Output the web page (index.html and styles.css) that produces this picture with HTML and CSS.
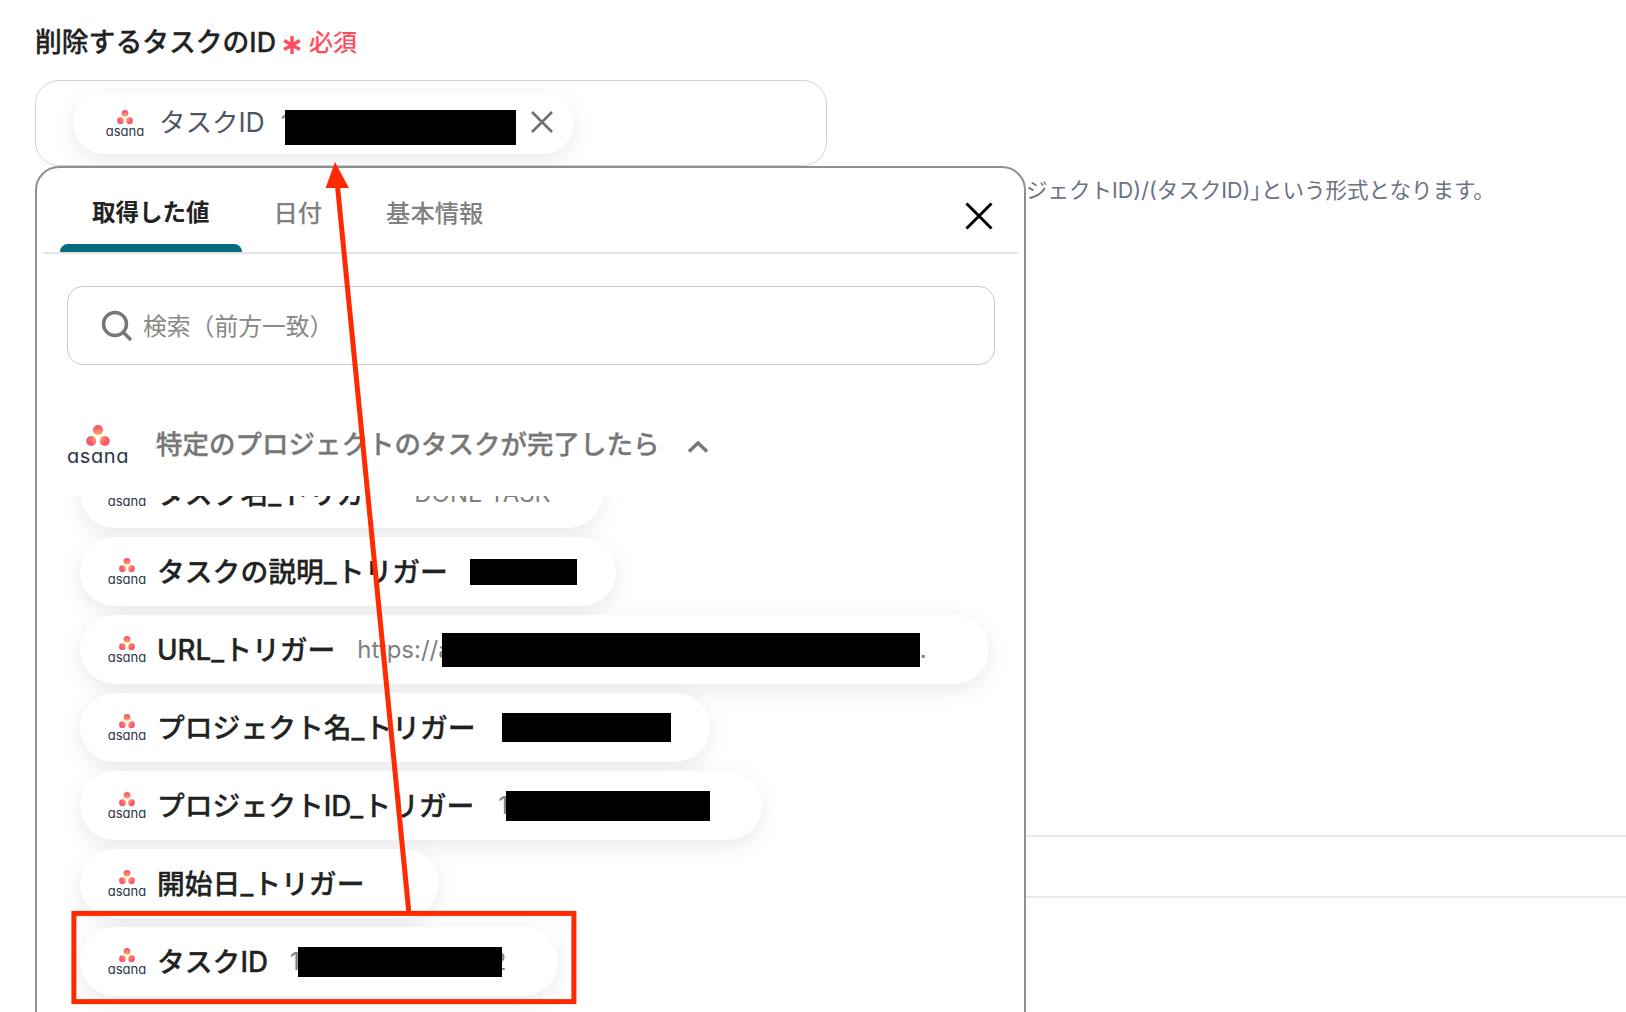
FILE: index.html
```html
<!DOCTYPE html>
<html lang="ja">

<head>
    <meta charset="UTF-8">
    <title>削除するタスクのID</title>
    <link rel="stylesheet" href="styles.css">
</head>

<body>

    <svg class="defs" width="0" height="0" aria-hidden="true">
        <defs>
            <radialGradient id="asanaDot" gradientUnits="userSpaceOnUse" cx="12" cy="11.5" r="13">
                <stop offset="0%" stop-color="#ffb84a"></stop>
                <stop offset="30%" stop-color="#ff9a58"></stop>
                <stop offset="70%" stop-color="#fa5c74"></stop>
                <stop offset="100%" stop-color="#f9507a"></stop>
            </radialGradient>
            <symbol id="asanaDots" viewBox="0 0 24 21">
                <circle cx="12" cy="5" r="5" fill="url(#asanaDot)"></circle>
                <circle cx="5.2" cy="16" r="5" fill="url(#asanaDot)"></circle>
                <circle cx="18.8" cy="16" r="5" fill="url(#asanaDot)"></circle>
            </symbol>
        </defs>
    </svg>

    <label class="field-label">
        <span class="field-name">削除するタスクのID</span>
        <svg class="required-mark" viewBox="0 0 18 18">
            <path d="M9 0 V18 M1.2 4.5 L16.8 13.5 M16.8 4.5 L1.2 13.5"></path>
        </svg>
        <span class="required-text">必須</span>
    </label>

    <div class="field">
        <div class="input-box">
            <div class="chip chip-input">
                <div class="logo">
                    <svg class="logo-dots"><use href="#asanaDots"></use></svg>
                    <span class="logo-word">asana</span>
                </div>
                <span class="chip-label">タスクID</span>
                <span class="chip-value">1<span class="redact redact-input"></span></span>
                <svg class="chip-remove" viewBox="0 0 24 24">
                    <path d="M2 2 L22 22 M22 2 L2 22"></path>
                </svg>
            </div>
        </div>

        <!-- Dropdown -->
        <div class="dropdown">
            <div class="tabs">
                <div class="tab active"><span class="tab-label">取得した値</span></div>
                <div class="tab"><span class="tab-label">日付</span></div>
                <div class="tab"><span class="tab-label">基本情報</span></div>
                <svg class="tabs-close" viewBox="0 0 28 28">
                    <path d="M1.5 1.5 L26.5 26.5 M26.5 1.5 L1.5 26.5"></path>
                </svg>
            </div>

            <div class="search">
                <svg class="search-icon" viewBox="0 0 32 32">
                    <circle cx="14" cy="14" r="11.5"></circle>
                    <path d="M22.5 22.5 L30 30"></path>
                </svg>
                <span class="search-text">検索（前方一致）</span>
            </div>

            <div class="group-head">
                <div class="logo logo-large">
                    <svg class="logo-dots"><use href="#asanaDots"></use></svg>
                    <span class="logo-word">asana</span>
                </div>
                <span class="group-title">特定のプロジェクトのタスクが完了したら</span>
                <svg class="group-chevron" viewBox="0 0 22 12">
                    <path d="M2 10.5 L11 2 L20 10.5"></path>
                </svg>
            </div>

            <div class="list">
                <div class="list-inner">
                    <div class="chip">
                        <div class="logo">
                            <svg class="logo-dots"><use href="#asanaDots"></use></svg>
                            <span class="logo-word">asana</span>
                        </div>
                        <span class="chip-label">タスク名_トリガー</span>
                        <span class="chip-value">DONE TASK</span>
                    </div>
                    <div class="chip chip-desc">
                        <div class="logo">
                            <svg class="logo-dots"><use href="#asanaDots"></use></svg>
                            <span class="logo-word">asana</span>
                        </div>
                        <span class="chip-label">タスクの説明_トリガー</span>
                        <span class="chip-value"><span class="redact redact-desc"></span></span>
                    </div>
                    <div class="chip chip-url">
                        <div class="logo">
                            <svg class="logo-dots"><use href="#asanaDots"></use></svg>
                            <span class="logo-word">asana</span>
                        </div>
                        <span class="chip-label">URL_トリガー</span>
                        <span class="chip-value">https://a<span class="redact redact-url"></span>.</span>
                    </div>
                    <div class="chip chip-project">
                        <div class="logo">
                            <svg class="logo-dots"><use href="#asanaDots"></use></svg>
                            <span class="logo-word">asana</span>
                        </div>
                        <span class="chip-label">プロジェクト名_トリガー</span>
                        <span class="chip-value"><span class="redact redact-project"></span></span>
                    </div>
                    <div class="chip chip-project-id">
                        <div class="logo">
                            <svg class="logo-dots"><use href="#asanaDots"></use></svg>
                            <span class="logo-word">asana</span>
                        </div>
                        <span class="chip-label">プロジェクトID_トリガー</span>
                        <span class="chip-value">1<span class="redact redact-id"></span></span>
                    </div>
                    <div class="chip chip-start">
                        <div class="logo">
                            <svg class="logo-dots"><use href="#asanaDots"></use></svg>
                            <span class="logo-word">asana</span>
                        </div>
                        <span class="chip-label">開始日_トリガー</span>
                    </div>
                    <div class="chip">
                        <div class="logo">
                            <svg class="logo-dots"><use href="#asanaDots"></use></svg>
                            <span class="logo-word">asana</span>
                        </div>
                        <span class="chip-label">タスクID</span>
                        <span class="chip-value">1<span class="redact redact-id"></span><span class="value-tail">2</span></span>
                    </div>
                </div>
            </div>
        </div>
    </div>

    <p class="help">ジェクトID)/(タスクID)｣という形式となります。</p>

    <div class="rows">
        <div class="row"></div>
        <div class="row"></div>
    </div>

    <!-- Annotation drawn over the page -->
    <svg class="annotation" viewBox="0 0 1626 1012">
        <path class="annotation-line" d="M337.5 186 L408.7 911"></path>
        <polygon class="annotation-head" points="335,162 349,188 325.6,188"></polygon>
        <rect class="annotation-box" x="73.9" y="913.4" width="500" height="88.2"></rect>
    </svg>

</body>

</html>
```

FILE: styles.css
```css
* {
    box-sizing: border-box;
}

body {
    position: relative;
    height: 1012px;
    margin: 0;
    overflow: hidden;
    background-color: #fff;
    color: #222;
    font-family: Inter, "Noto Sans CJK JP", sans-serif;
}

.defs {
    position: absolute;
}

.field-label {
    display: flex;
    align-items: center;
    height: 50px;
    margin: 18px 0 12px 35px;
    font-size: 26.8px;
    font-weight: 500;
    line-height: 50px;
}

.field-name {
    padding-bottom: 2px;
    -webkit-text-stroke: 0.3px #222;
}

.required-mark {
    width: 18px;
    height: 18px;
    margin: 4px 0 0 7px;
    fill: none;
    stroke: #ff4d5e;
    stroke-width: 3.4;
}

.required-text {
    margin-left: 8px;
    color: #ff4d5e;
    font-size: 24px;
    font-weight: 500;
}

.field {
    position: relative;
    width: 792px;
    margin-left: 35px;
}

.input-box {
    height: 86px;
    padding: 12px 0 0 37px;
    border: 1px solid #cfd4dc;
    border-radius: 24px;
    background-color: #fff;
}

/* Chips */
.chip {
    display: inline-flex;
    flex: none;
    align-items: center;
    height: 69px;
    padding: 0 52px 0 28px;
    border-radius: 35px;
    background-color: #fff;
    box-shadow: 0 6px 22px rgba(0, 0, 0, 0.09);
}

.chip-input {
    height: 61px;
    padding: 0 20px 0 33px;
    border-radius: 31px;
}

.chip-input .chip-label {
    margin-left: 15px;
    padding-bottom: 7px;
    color: #4b5563;
    font-size: 26.5px;
    font-weight: 400;
    -webkit-text-stroke: 0;
}

.chip-input .chip-value {
    margin-left: 16px;
}

.chip-desc,
.chip-project {
    padding-right: 39px;
}

.chip-url {
    padding-right: 62px;
}

.chip-start {
    padding-right: 75px;
}

.chip-label {
    margin-left: 11px;
    padding-bottom: 3px;
    font-size: 27.8px;
    font-weight: 500;
    white-space: nowrap;
    -webkit-text-stroke: 0.3px #222;
}

.chip-value {
    display: flex;
    align-items: center;
    margin-left: 22px;
    color: #808080;
    font-size: 24px;
    white-space: nowrap;
}

.chip-project-id .chip-value {
    margin-left: 24px;
}

.value-tail {
    margin-left: -10px;
}

.redact {
    position: relative;
    z-index: 1;
    display: block;
    background-color: #000;
}

.redact-input {
    width: 231px;
    height: 35px;
    margin: 8px 0 0 -6px;
}

.redact-desc {
    width: 107px;
    height: 26px;
}

.redact-url {
    width: 478px;
    height: 34px;
    margin-left: -10px;
}

.redact-project {
    width: 169px;
    height: 29px;
    margin-left: 4px;
}

.redact-id {
    width: 204px;
    height: 30px;
    margin-left: -2px;
}

.chip-remove {
    flex: none;
    width: 24px;
    height: 24px;
    margin: 0 0 4px 14px;
    fill: none;
    stroke: #707070;
    stroke-width: 2.6;
}

/* Asana logo */
.logo {
    display: flex;
    flex: none;
    flex-direction: column;
    align-items: center;
    width: 38px;
    margin-bottom: 2px;
}

.logo-dots {
    width: 16px;
    height: 14px;
}

.logo-word {
    margin-top: 3px;
    color: #2b3546;
    font-family: Inter, sans-serif;
    font-feature-settings: "cv11";
    font-size: 13px;
    line-height: 8px;
}

.logo-large {
    width: 60px;
    margin-bottom: 0;
}

.logo-large .logo-dots {
    width: 24px;
    height: 21px;
}

.logo-large .logo-word {
    margin-top: 5px;
    font-size: 20px;
    letter-spacing: 0.6px;
    line-height: 11px;
}

/* Dropdown */
.dropdown {
    position: absolute;
    top: 100%;
    left: 0;
    z-index: 2;
    display: flex;
    flex-direction: column;
    width: 991px;
    height: 880px;
    border: 2px solid #8f8f8f;
    border-radius: 24px;
    background-color: #fff;
}

.tabs {
    display: flex;
    height: 86px;
    margin: 0 6px;
    padding-left: 17px;
    border-bottom: 2px solid #e5e5e5;
}

.tab {
    display: flex;
    flex-direction: column;
    color: #808080;
    font-size: 24.3px;
    font-weight: 500;
}

.tab-label {
    padding: 31px 32px 0;
    line-height: 28px;
}

.tab.active {
    color: #222;
    font-size: 23.5px;
    font-weight: 700;
}

.tab.active::after {
    content: "";
    height: 8px;
    margin-top: auto;
    border-radius: 8px 8px 0 0;
    background-color: #066a80;
}

.tabs-close {
    width: 28px;
    height: 28px;
    margin: 34px 25px 0 auto;
    fill: none;
    stroke: #000;
    stroke-width: 3;
}

.search {
    display: flex;
    flex: none;
    align-items: center;
    height: 79px;
    margin: 32px 29px 0 30px;
    padding-left: 33px;
    border: 1px solid #c9c9c9;
    border-radius: 16px;
    color: #888;
    font-size: 23.8px;
}

.search-icon {
    width: 32px;
    height: 32px;
    margin-right: 10px;
    fill: none;
    stroke: #777;
    stroke-width: 3.5;
}

.search-text {
    padding-bottom: 2px;
}

.group-head {
    display: flex;
    flex: none;
    align-items: center;
    height: 131px;
    padding: 26px 0 0 31px;
}

.group-title {
    margin-left: 28px;
    padding-bottom: 2px;
    color: #777;
    font-size: 26.5px;
    font-weight: 500;
    white-space: nowrap;
    -webkit-text-stroke: 0.3px #777;
}

.group-chevron {
    width: 22px;
    height: 12px;
    margin: 6px 0 0 27px;
    fill: none;
    stroke: #777;
    stroke-width: 3.5;
}

.list {
    flex: 1;
    padding-left: 43px;
    overflow: hidden;
}

.list-inner {
    display: flex;
    flex-direction: column;
    align-items: flex-start;
    gap: 9px;
    margin-top: -37px;
}

/* Page behind the dropdown */
.help {
    margin: 11px 0 0 1026px;
    color: #6b7280;
    font-size: 21.5px;
    line-height: 26px;
    white-space: nowrap;
}

.rows {
    margin: 632px 0 0 1026px;
}

.row {
    height: 61px;
    border-top: 2px solid #e8e8e8;
}

.annotation {
    position: absolute;
    top: 0;
    left: 0;
    z-index: 3;
    width: 1626px;
    height: 1012px;
    pointer-events: none;
}

.annotation-line {
    fill: none;
    stroke: #ff2a00;
    stroke-width: 5;
}

.annotation-head {
    fill: #ff2a00;
}

.annotation-box {
    fill: none;
    stroke: #ff2a00;
    stroke-width: 5;
}
```
